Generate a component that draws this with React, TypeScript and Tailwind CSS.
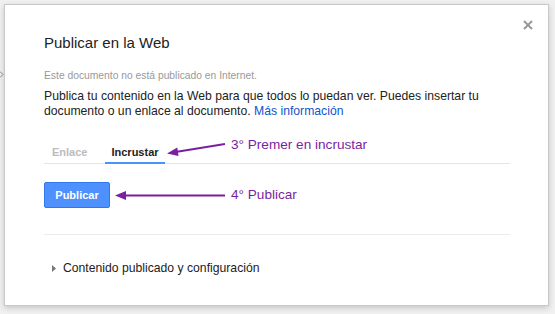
import React from "react";

export default function App() {
  return (
    <div className="relative w-[555px] h-[314px] bg-[#f1f1f1] pt-[4px] pl-[4px] font-['Liberation_Sans',Arial,sans-serif] overflow-hidden">
      <svg className="absolute left-0 top-[71px]" width="4" height="7" viewBox="0 0 4 7">
        <path d="M0 0.5 L3 3.5 L0 6.5" fill="none" stroke="#888" strokeWidth="1" />
      </svg>
      <div className="relative w-[545px] h-[302px] bg-white border border-[#c8c8c8] shadow-[0_2px_6px_rgba(0,0,0,0.18)] pl-[39px] pr-[38px] pt-[28px]">
        <button className="absolute right-[15px] top-[15px] w-[10px] h-[10px]">
          <svg width="10" height="10" viewBox="0 0 10 10">
            <path d="M1 1 L9 9 M9 1 L1 9" stroke="#999" strokeWidth="2" />
          </svg>
        </button>
        <h1 className="text-[15px] leading-[20px] text-[#222]">Publicar en la Web</h1>
        <p className="mt-[16px] text-[10.3px] leading-[14px] text-[#999]">
          Este documento no está publicado en Internet.
        </p>
        <div className="mt-[6px] text-[12.2px] leading-[15px] text-[#222]">
          <p>Publica tu contenido en la Web para que todos lo puedan ver. Puedes insertar tu</p>
          <p>
            documento o un enlace al documento. <span className="text-[#15c]">Más información</span>
          </p>
        </div>
        <div className="mt-[26px] flex border-b border-[#e5e5e5] h-[19px]">
          <div className="ml-[8px] text-[11px] leading-[14px] font-bold text-[#bbb]">Enlace</div>
          <div className="ml-[18px] px-[6px] pb-[3px] text-[11px] leading-[14px] font-bold text-[#222] border-b-2 border-[#4d90fe] h-[19px]">
            Incrustar
          </div>
        </div>
        <button className="mt-[18px] w-[66px] h-[26px] rounded-[2px] bg-[#4d90fe] border border-[#3079ed] text-white text-[11px] font-bold flex items-center justify-center">
          Publicar
        </button>
        <div className="mt-[26px] h-px bg-[#ebebeb]" />
        <div className="mt-[25px] flex items-center">
          <svg className="ml-[8px]" width="4" height="7" viewBox="0 0 4 7">
            <path d="M0 0 L4 3.5 L0 7 Z" fill="#777" />
          </svg>
          <span className="ml-[7px] text-[12.2px] leading-[16px] text-[#222]">
            Contenido publicado y configuración
          </span>
        </div>
      </div>
      <svg className="absolute left-0 top-0 pointer-events-none" width="555" height="314" viewBox="0 0 555 314">
        <line x1="225" y1="144" x2="177" y2="151.8" stroke="#7a1fa2" strokeWidth="2" />
        <polygon points="167,153.5 178.5,156 177.3,147.5" fill="#7a1fa2" />
        <line x1="225" y1="195.5" x2="124" y2="195.5" stroke="#7a1fa2" strokeWidth="2" />
        <polygon points="115,195.5 126,191 126,200" fill="#7a1fa2" />
      </svg>
      <div className="absolute left-[231px] top-[136px] text-[13.6px] leading-[18px] text-[#7a1fa2]">
        3° Premer en incrustar
      </div>
      <div className="absolute left-[231px] top-[186px] text-[13.6px] leading-[18px] text-[#7a1fa2]">
        4° Publicar
      </div>
    </div>
  );
}
